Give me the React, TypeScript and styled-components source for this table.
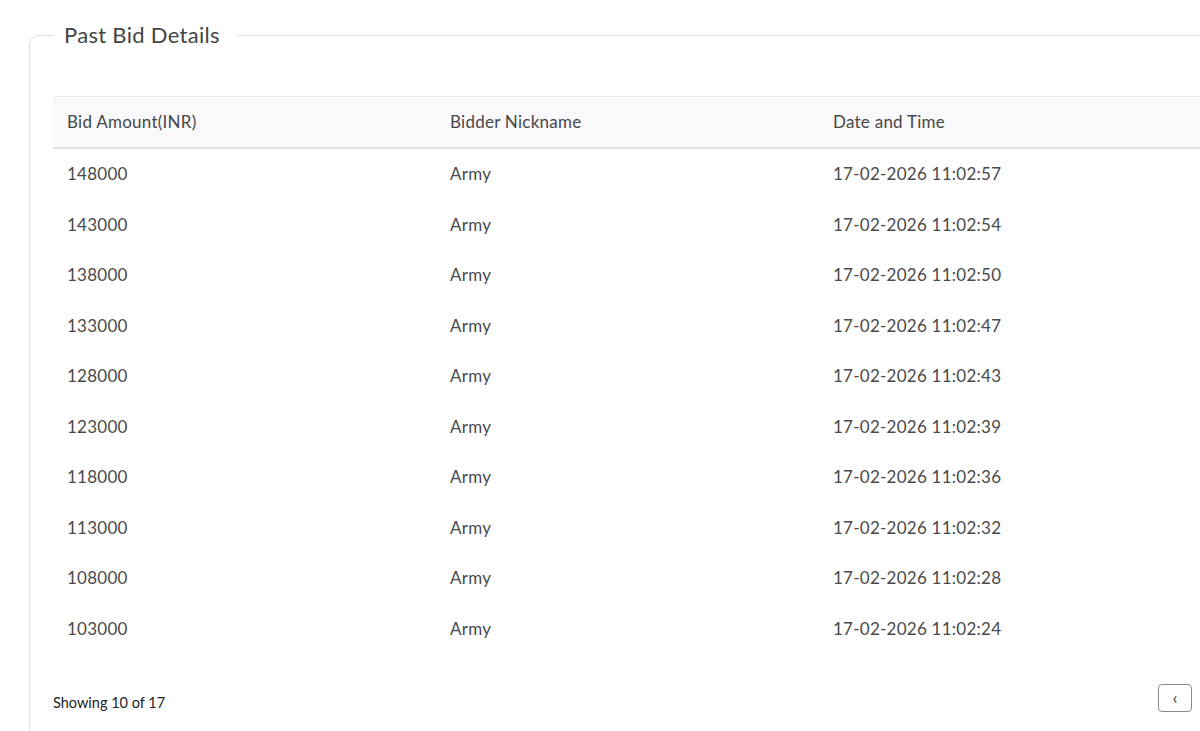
import React from "react";
import styled, { createGlobalStyle } from "styled-components";

const Global = createGlobalStyle`
  html, body { margin: 0; padding: 0; background: #fff; overflow: hidden; }
  body { font-family: Lato, "Open Sans", sans-serif; color: #4a4a4a; }
`;

const Page = styled.div`
  width: 1200px;
  height: 731px;
  overflow: hidden;
`;

const Frame = styled.fieldset`
  box-sizing: border-box;
  margin: 21px 0 0 29px;
  padding: 0 0 40px 23px;
  width: 1220px;
  min-width: 0;
  border: 1px solid #e2e2e6;
  border-radius: 10px;
`;

const Legend = styled.legend`
  padding: 0 16px 0 11px;
  font-size: 22px;
  letter-spacing: 0.3px;
  line-height: 28px;
  color: #444;
  font-weight: 400;
`;

const Table = styled.table`
  margin-top: 47px;
  width: 1149px;
  border-collapse: collapse;
  table-layout: fixed;
`;

const HeadCell = styled.th`
  text-align: left;
  font-weight: 400;
  font-size: 17px;
  line-height: 20px;
  letter-spacing: 0.25px;
  color: #474747;
  background: #f9f9fc;
  height: 50px;
  padding: 0 14px;
  border-top: 1px solid #e8e8ee;
  border-bottom: 2px solid #e2e2e6;
`;

const Cell = styled.td`
  font-size: 17px;
  line-height: 20px;
  letter-spacing: 0.25px;
  color: #4a4a4a;
  height: 50.5px;
  padding: 0 14px;
`;

const Footer = styled.div`
  display: flex;
  align-items: center;
  justify-content: space-between;
  width: 1139px;
  margin-top: 30px;
`;

const Count = styled.span`
  font-size: 14.5px;
  color: #222;
`;

const PageButton = styled.button`
  box-sizing: border-box;
  width: 34px;
  height: 28px;
  margin-bottom: 8px;
  border: 1px solid #8a8a8a;
  border-radius: 4px;
  background: #fff;
  color: #444;
  font-family: inherit;
  font-size: 18px;
  line-height: 1;
  display: flex;
  align-items: center;
  justify-content: center;
  padding: 0 0 2px;
`;

const rows = [
  ["148000", "17-02-2026 11:02:57"],
  ["143000", "17-02-2026 11:02:54"],
  ["138000", "17-02-2026 11:02:50"],
  ["133000", "17-02-2026 11:02:47"],
  ["128000", "17-02-2026 11:02:43"],
  ["123000", "17-02-2026 11:02:39"],
  ["118000", "17-02-2026 11:02:36"],
  ["113000", "17-02-2026 11:02:32"],
  ["108000", "17-02-2026 11:02:28"],
  ["103000", "17-02-2026 11:02:24"],
];

export default function App() {
  return (
    <Page>
      <Global />
      <Frame>
        <Legend>Past Bid Details</Legend>
        <Table>
          <thead>
            <tr>
              <HeadCell>Bid Amount(INR)</HeadCell>
              <HeadCell>Bidder Nickname</HeadCell>
              <HeadCell>Date and Time</HeadCell>
            </tr>
          </thead>
          <tbody>
            {rows.map(([amt, dt]) => (
              <tr key={amt}>
                <Cell>{amt}</Cell>
                <Cell>Army</Cell>
                <Cell>{dt}</Cell>
              </tr>
            ))}
          </tbody>
        </Table>
        <Footer>
          <Count>Showing 10 of 17</Count>
          <PageButton aria-label="Previous page">‹</PageButton>
        </Footer>
      </Frame>
    </Page>
  );
}
